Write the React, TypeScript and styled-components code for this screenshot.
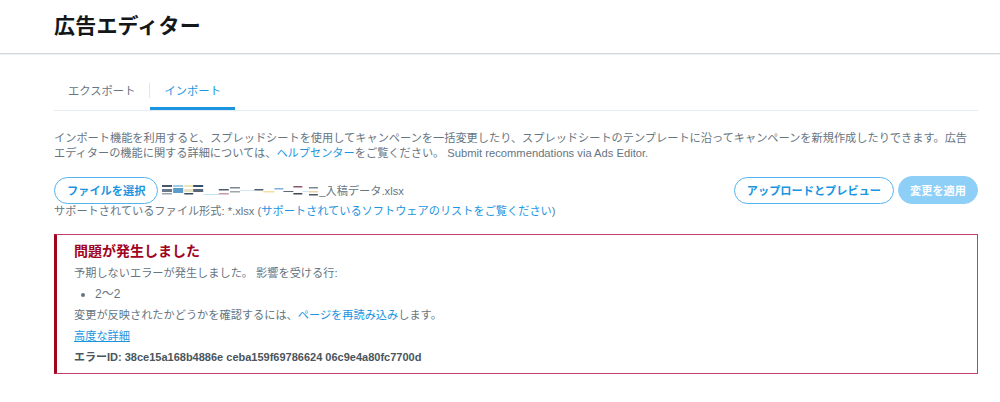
import React from "react";
import styled, { createGlobalStyle } from "styled-components";

const GlobalStyle = createGlobalStyle`
  html, body { margin: 0; padding: 0; background: #fff; }
  body {
    font-family: "Liberation Sans", Arial, "Noto Sans CJK JP", sans-serif;
    color: #66757f;
    -webkit-font-smoothing: antialiased;
  }
  * { box-sizing: border-box; }
`;

const Header = styled.header`
  height: 54px;
  border-bottom: 1px solid #d4d9de;
  box-shadow: 0 1px 0 #eef1f4;
  padding: 0 54px;
  display: flex;
  align-items: center;
`;

const Title = styled.h1`
  margin: 0;
  margin-top: -6px;
  font-size: 21px;
  font-weight: 700;
  color: #14171a;
  letter-spacing: 0.2px;
`;

const Main = styled.main`
  padding: 16px 22px 0 54px;
`;

const Tabs = styled.nav`
  display: flex;
  align-items: stretch;
  height: 41px;
  border-bottom: 1px solid #e6ecf0;
`;

const Tab = styled.div<{ $active?: boolean }>`
  display: flex;
  align-items: center;
  padding: 2px 14px 0;
  font-size: 11.3px;
  color: ${(p) => (p.$active ? "#1b95e0" : "#66757f")};
  border-bottom: 3px solid ${(p) => (p.$active ? "#1b95e0" : "transparent")};
`;

const TabDivider = styled.span`
  align-self: center;
  width: 1px;
  height: 15px;
  background: #e1e8ed;
`;

const Description = styled.p`
  margin: 20px 0 0;
  font-size: 11.2px;
  line-height: 15px;
  color: #66757f;
`;

const Link = styled.a<{ $underline?: boolean }>`
  color: #1b95e0;
  text-decoration: ${(p) => (p.$underline ? "underline" : "none")};
  cursor: pointer;
`;

const FileRow = styled.div`
  margin-top: 15px;
  display: flex;
  align-items: center;
  justify-content: space-between;
`;

const Group = styled.div`
  display: flex;
  align-items: center;
  gap: 4px;
`;

const PillButton = styled.button<{ $primary?: boolean }>`
  height: ${(p) => (p.$primary ? "28px" : "27px")};
  padding: 0 ${(p) => (p.$primary ? "11px" : "12px")};
  border-radius: 14px;
  font-family: inherit;
  font-size: 11.2px;
  font-weight: 700;
  cursor: pointer;
  border: 1px solid ${(p) => (p.$primary ? "#8ecff8" : "#55b3f0")};
  background: ${(p) => (p.$primary ? "#8ecff8" : "#fff")};
  color: ${(p) => (p.$primary ? "#fff" : "#1b95e0")};
`;

const FileName = styled.span`
  display: inline-flex;
  align-items: center;
  font-size: 11.2px;
  color: #66757f;
`;

const Support = styled.div`
  font-size: 11.2px;
  line-height: 15px;
`;

const Alert = styled.section`
  margin-top: 15px;
  border: 1px solid #c43d6e;
  border-left: 3px solid #a0041e;
  padding: 6px 16px 5px 17px;
`;

const AlertTitle = styled.h2`
  margin: 0 0 1px;
  font-size: 14px;
  line-height: 21px;
  font-weight: 700;
  color: #a0041e;
`;

const AlertText = styled.p<{ $bold?: boolean }>`
  margin: 0;
  font-size: ${(p) => (p.$bold ? "11px" : "11.2px")};
  line-height: 21px;
  color: ${(p) => (p.$bold ? "#4a555d" : "#66757f")};
  font-weight: ${(p) => (p.$bold ? 700 : 400)};
`;

const RowList = styled.ul`
  margin: 0;
  padding-left: 21px;
  font-size: 12px;
  line-height: 21px;
  color: #66757f;
`;

const Redacted = () => (
  <svg width="157" height="12" viewBox="0 0 141 12" preserveAspectRatio="none">
    <rect x="0" y="1" width="9" height="2" fill="#4a5663" />
    <rect x="0" y="5" width="9" height="3" fill="#6b7a8a" />
    <rect x="0" y="9" width="9" height="1.5" fill="#9aa5b0" />
    <rect x="10" y="1" width="9" height="2" fill="#9cc9e6" />
    <rect x="10" y="4" width="9" height="5" fill="#5a9ccc" />
    <rect x="20" y="1" width="8" height="2" fill="#f0e6b0" />
    <rect x="20" y="5" width="8" height="3" fill="#e8e2c4" />
    <rect x="20" y="9" width="8" height="1.5" fill="#3d4856" />
    <rect x="28" y="1" width="9" height="2" fill="#34506e" />
    <rect x="28" y="5" width="9" height="3" fill="#596777" />
    <rect x="37" y="10" width="14" height="1" fill="#bfe4f4" />
    <rect x="51" y="5" width="9" height="1.5" fill="#4f5d6b" />
    <rect x="51" y="9" width="9" height="1.5" fill="#c89aa6" />
    <rect x="61" y="3" width="9" height="1.5" fill="#7b8792" />
    <rect x="61" y="7" width="9" height="1.5" fill="#9aa5b0" />
    <rect x="70" y="6" width="13" height="1" fill="#cfeaf6" />
    <rect x="83" y="5" width="8" height="1.5" fill="#4f5d6b" />
    <rect x="91" y="7" width="10" height="1.5" fill="#f0e0a0" />
    <rect x="101" y="4" width="8" height="1.5" fill="#7fb2d8" />
    <rect x="109" y="7" width="9" height="1" fill="#5f6b78" />
    <rect x="118" y="2" width="8" height="1.5" fill="#8a5870" />
    <rect x="118" y="9" width="8" height="1.5" fill="#3d4856" />
    <rect x="126" y="7" width="6" height="1" fill="#cfeaf6" />
    <rect x="132" y="3" width="8" height="1.5" fill="#7b8792" />
    <rect x="132" y="7" width="8" height="1.5" fill="#f2d0a0" />
    <rect x="132" y="10" width="8" height="1.5" fill="#4a5663" />
  </svg>
);

export default function App() {
  return (
    <>
      <GlobalStyle />
      <Header>
        <Title>広告エディター</Title>
      </Header>
      <Main>
        <Tabs>
          <Tab>エクスポート</Tab>
          <TabDivider />
          <Tab $active>インポート</Tab>
        </Tabs>
        <Description>
          インポート機能を利用すると、スプレッドシートを使用してキャンペーンを一括変更したり、スプレッドシートのテンプレートに沿ってキャンペーンを新規作成したりできます。広告
          <br />
          エディターの機能に関する詳細については、<Link>ヘルプセンター</Link>をご覧ください。 Submit recommendations via Ads Editor.
        </Description>
        <FileRow>
          <Group>
            <PillButton>ファイルを選択</PillButton>
            <FileName>
              <Redacted />
              _入稿データ.xlsx
            </FileName>
          </Group>
          <Group>
            <PillButton>アップロードとプレビュー</PillButton>
            <PillButton $primary>変更を適用</PillButton>
          </Group>
        </FileRow>
        <Support>
          サポートされているファイル形式: *.xlsx (<Link>サポートされているソフトウェアのリストをご覧ください</Link>)
        </Support>
        <Alert>
          <AlertTitle>問題が発生しました</AlertTitle>
          <AlertText>予期しないエラーが発生しました。 影響を受ける行:</AlertText>
          <RowList>
            <li>2〜2</li>
          </RowList>
          <AlertText>
            変更が反映されたかどうかを確認するには、<Link>ページを再読み込み</Link>します。
          </AlertText>
          <AlertText>
            <Link $underline>高度な詳細</Link>
          </AlertText>
          <AlertText $bold>エラーID: 38ce15a168b4886e ceba159f69786624 06c9e4a80fc7700d</AlertText>
        </Alert>
      </Main>
    </>
  );
}
